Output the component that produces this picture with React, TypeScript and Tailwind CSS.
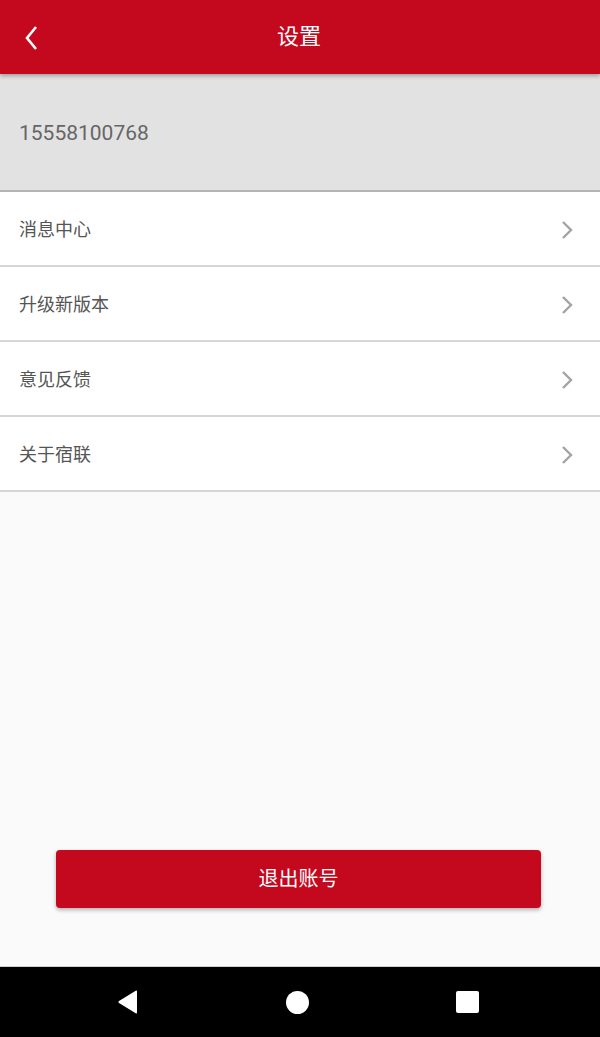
const rows = ['消息中心', '升级新版本', '意见反馈', '关于宿联'];

function Chevron() {
  return (
    <svg width="14" height="20" viewBox="0 0 14 20" className="mr-[26px]">
      <path d="M3 2 L11 10 L3 18" fill="none" stroke="#a3a3a3" strokeWidth="2.4" />
    </svg>
  );
}

export default function App() {
  return (
    <div
      className="w-[600px] h-[1037px] flex flex-col bg-[#fafafa] overflow-hidden"
      style={{ fontFamily: 'Roboto, "Noto Sans CJK SC", sans-serif' }}
    >
      <header className="relative z-10 h-[74px] shrink-0 bg-[#c4091f] flex items-center shadow-[0_2px_4px_rgba(0,0,0,0.3)]">
        <svg width="20" height="28" viewBox="0 0 20 28" className="absolute left-[22px] top-[24px]">
          <path d="M14 3 L5 14 L14 25" fill="none" stroke="#fff" strokeWidth="2.6" />
        </svg>
        <h1 className="w-full text-center text-white text-[22px] leading-none pr-[2px]">设置</h1>
      </header>

      <div className="h-[118px] shrink-0 bg-[#e2e2e2] border-b-2 border-[#b4b4b4] flex items-center px-[19px] pt-[3px]">
        <span className="text-[21px] text-[#666666]">15558100768</span>
      </div>

      <div className="flex flex-col bg-white">
        {rows.map((r) => (
          <div key={r} className="h-[75px] flex items-center justify-between border-b-2 border-[#d6d6d6] pl-[19px] pt-[2px]">
            <span className="text-[18px] text-[#555555]">{r}</span>
            <Chevron />
          </div>
        ))}
      </div>

      <div className="flex-1 flex flex-col justify-end items-start pl-[56px] pb-[58px]">
        <button className="w-[485px] h-[58px] rounded-[4px] bg-[#c4091f] text-white text-[20px] shadow-[0_2px_4px_rgba(0,0,0,0.3)]">
          退出账号
        </button>
      </div>

      <nav className="h-[71px] shrink-0 bg-black border-t border-[#cfcfcf] flex items-center justify-center pr-[4px]">
        <div className="flex items-center gap-[147px]">
          <svg width="22" height="24" viewBox="0 0 22 24">
            <path d="M20 1.5 L20 22.5 Q20 24 18.7 23.2 L2 13 Q0.5 12 2 11 L18.7 0.8 Q20 0 20 1.5 Z" fill="#fff" />
          </svg>
          <div className="w-[23px] h-[23px] rounded-full bg-white" />
          <div className="w-[23px] h-[22px] rounded-[2px] bg-white" />
        </div>
      </nav>
    </div>
  );
}
